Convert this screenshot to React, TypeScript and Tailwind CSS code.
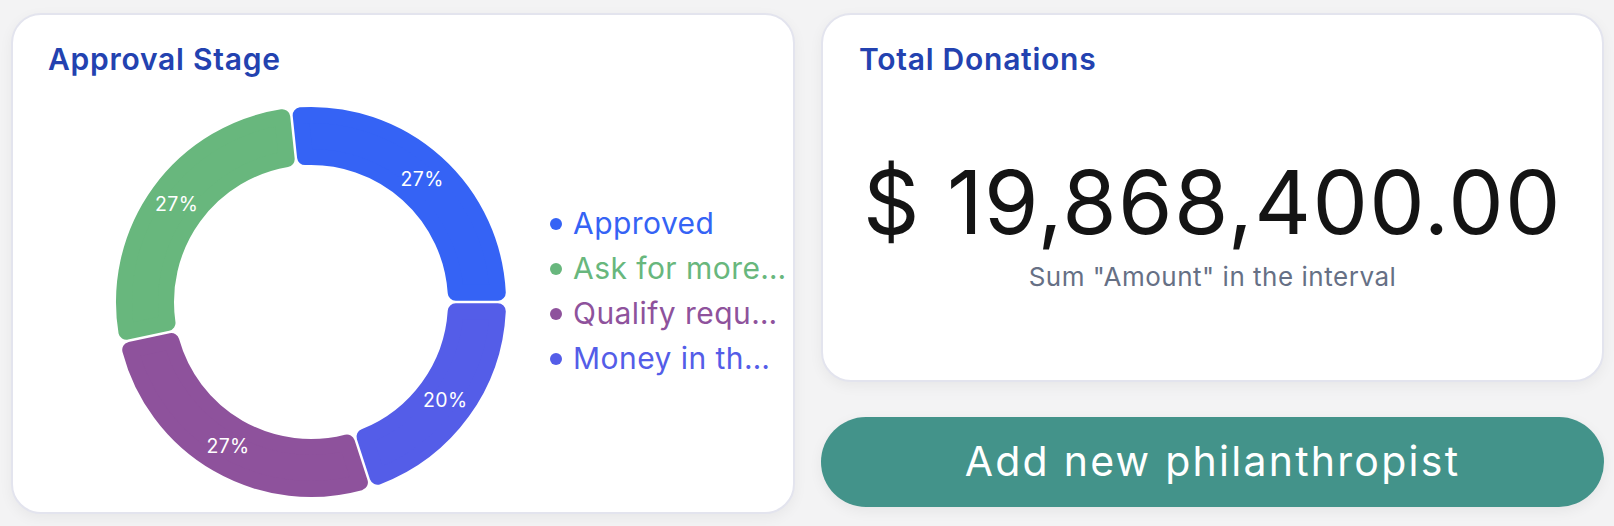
import React from "react";

const CX = 200;
const CY = 200;
const RO = 195;
const RI = 137;
const CR = 8;
const GAP = 1.25;

function pt(r: number, aDeg: number) {
  const a = (aDeg * Math.PI) / 180;
  return [CX + r * Math.sin(a), CY - r * Math.cos(a)];
}

function sectorPath(a0: number, a1: number) {
  const ro = RO - CR;
  const ri = RI + CR;
  const d = CR + GAP;
  const offO = (Math.asin(d / ro) * 180) / Math.PI;
  const offI = (Math.asin(d / ri) * 180) / Math.PI;
  const [x1, y1] = pt(ro, a0 + offO);
  const [x2, y2] = pt(ro, a1 - offO);
  const [x3, y3] = pt(ri, a1 - offI);
  const [x4, y4] = pt(ri, a0 + offI);
  const large = a1 - a0 > 180 ? 1 : 0;
  return `M ${x1} ${y1} A ${ro} ${ro} 0 ${large} 1 ${x2} ${y2} L ${x3} ${y3} A ${ri} ${ri} 0 ${large} 0 ${x4} ${y4} Z`;
}

const segments = [
  { a0: -6, a1: 90, color: "#3563f5", label: "27%" },
  { a0: 90, a1: 162, color: "#545de8", label: "20%" },
  { a0: 162, a1: 258, color: "#8e529c", label: "27%" },
  { a0: 258, a1: 354, color: "#68b77d", label: "27%" },
];

const legend = [
  { text: "Approved", cls: "text-[#3563f5]", dot: "bg-[#3563f5]" },
  { text: "Ask for more…", cls: "text-[#68b77d]", dot: "bg-[#68b77d]" },
  { text: "Qualify requ…", cls: "text-[#8e529c]", dot: "bg-[#8e529c]" },
  { text: "Money in th…", cls: "text-[#545de8]", dot: "bg-[#545de8]" },
];

function Donut() {
  return (
    <svg width={400} height={400} viewBox="0 0 400 400" className="ml-[98px] mt-[26px] shrink-0">
      {segments.map((s, i) => (
        <path
          key={i}
          d={sectorPath(s.a0, s.a1)}
          fill={s.color}
          stroke={s.color}
          strokeWidth={CR * 2}
          strokeLinejoin="round"
        />
      ))}
      {segments.map((s, i) => {
        const [x, y] = pt(166, (s.a0 + s.a1) / 2);
        return (
          <text
            key={"t" + i}
            x={x}
            y={y}
            fill="#ffffff"
            fontSize={19.5}
            textAnchor="middle"
            dominantBaseline="central"
            style={{ fontFamily: "Inter, 'Noto Sans', sans-serif", letterSpacing: "0.02em" }}
          >
            {s.label}
          </text>
        );
      })}
    </svg>
  );
}

export default function App() {
  return (
    <div className="min-h-[526px] bg-[#f3f3f4] pl-[11px] pt-[13px] flex gap-[26px] font-['Inter','Noto_Sans',sans-serif]">
      <div className="w-[784px] h-[501px] rounded-[30px] border-2 border-[#e3e4ee] bg-white shadow-[0_4px_14px_rgba(0,0,0,0.05)] flex flex-col">
        <div className="pt-[27px] pl-[35px] text-[30px] leading-[34px] tracking-[0.025em] font-semibold text-[#2342b0]">
          Approval Stage
        </div>
        <div className="flex items-start">
          <Donut />
          <ul className="ml-[39px] mt-[125px] flex flex-col">
            {legend.map((l) => (
              <li key={l.text} className="flex items-center h-[45px] gap-[11px]">
                <span className={`w-[12px] h-[12px] rounded-full ${l.dot}`} />
                <span className={`text-[30px] leading-[45px] tracking-[0.015em] whitespace-nowrap ${l.cls}`}>{l.text}</span>
              </li>
            ))}
          </ul>
        </div>
      </div>
      <div className="w-[783px] flex flex-col gap-[35px]">
        <div className="h-[369px] rounded-[30px] border-2 border-[#e3e4ee] bg-white shadow-[0_4px_14px_rgba(0,0,0,0.05)] flex flex-col">
          <div className="pt-[27px] pl-[36px] text-[30px] leading-[34px] tracking-[0.025em] font-semibold text-[#2342b0]">
            Total Donations
          </div>
          <div className="mt-[82px] text-center text-[88px] leading-[88px] tracking-[1.3px] text-[#141414]">
            $ 19,868,400.00
          </div>
          <div className="mt-[18px] text-center text-[26px] leading-[26px] tracking-[0.02em] text-[#667085]">
            Sum "Amount" in the interval
          </div>
        </div>
        <button className="h-[90px] rounded-[45px] bg-[#43938a] text-white text-[41px] tracking-[0.055em] flex items-center justify-center shadow-[0_4px_14px_rgba(0,0,0,0.06)]">
          Add new philanthropist
        </button>
      </div>
    </div>
  );
}
